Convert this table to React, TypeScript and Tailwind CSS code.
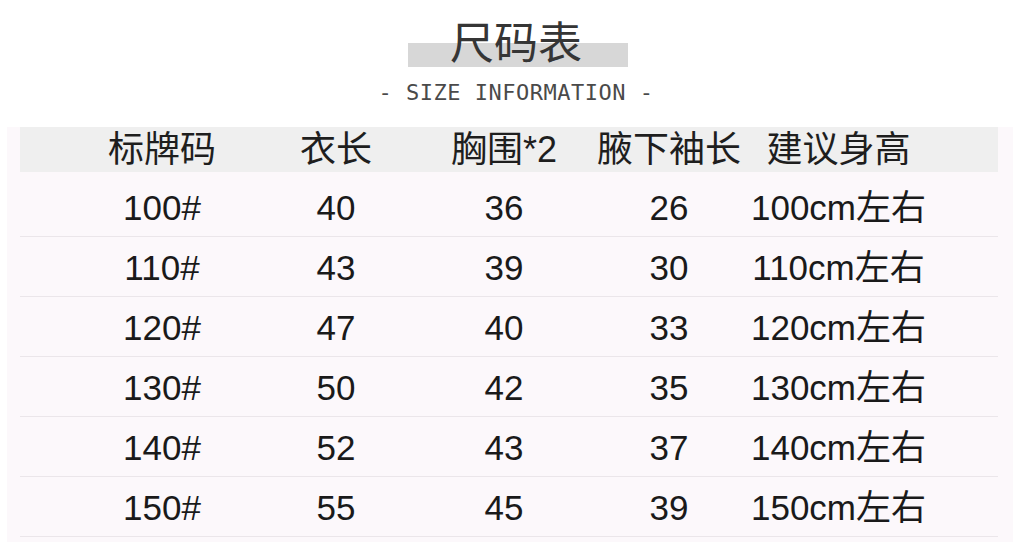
import React from 'react';

const headers = ['标牌码', '衣长', '胸围*2', '腋下袖长', '建议身高'];

const rows = [
  ['100#', '40', '36', '26', '100cm左右'],
  ['110#', '43', '39', '30', '110cm左右'],
  ['120#', '47', '40', '33', '120cm左右'],
  ['130#', '50', '42', '35', '130cm左右'],
  ['140#', '52', '43', '37', '140cm左右'],
  ['150#', '55', '45', '39', '150cm左右'],
];

const cols = 'grid grid-cols-[176px_172px_164px_166px_173px] pl-[54px]';

const App = () => {
  return (
    <div className="w-[1030px] h-[542px] overflow-hidden bg-white font-['Liberation_Sans','Noto_Sans_CJK_SC',sans-serif]">
      {/* Title */}
      <div className="pt-[18px] flex justify-center">
        <div className="relative pl-[2px]">
          <div className="absolute left-[-40px] top-[25px] w-[220px] h-[24px] bg-[#d7d7d7]"></div>
          <h1 className="relative text-[44px] leading-[44px] text-[#353535] font-['Noto_Sans_CJK_SC',sans-serif]">尺码表</h1>
        </div>
      </div>
      <div className="mt-[20px] flex justify-center pl-[2px]">
        <p className="text-[22px] leading-[22px] text-[#4a4a4a] tracking-[0.5px] font-['DejaVu_Sans_Mono',monospace] whitespace-pre">
          - SIZE INFORMATION -
        </p>
      </div>

      {/* Table */}
      <div className="mt-[33px] ml-[7px] w-[1006px] h-[420px] bg-[#fcf8fb]">
        <div className={`${cols} -mt-[10px] ml-[13px] w-[978px] h-[45px] items-center bg-[#efefef] text-[#1e1e1e] text-[36px] leading-[45px]`}>
          {headers.map((h) => (
            <div key={h} className="flex justify-center whitespace-nowrap">{h}</div>
          ))}
        </div>
        <div className="ml-[13px] w-[978px] pt-[5px]">
          {rows.map((r) => (
            <div key={r[0]} className={`${cols} h-[60px] items-center border-b border-[#ebe6ea] text-[35px] text-[#1a1a1a]`}>
              {r.map((c, i) => (
                <div key={i} className="flex justify-center whitespace-nowrap pt-[4px]">{c}</div>
              ))}
            </div>
          ))}
        </div>
      </div>
    </div>
  );
};

export default App;
